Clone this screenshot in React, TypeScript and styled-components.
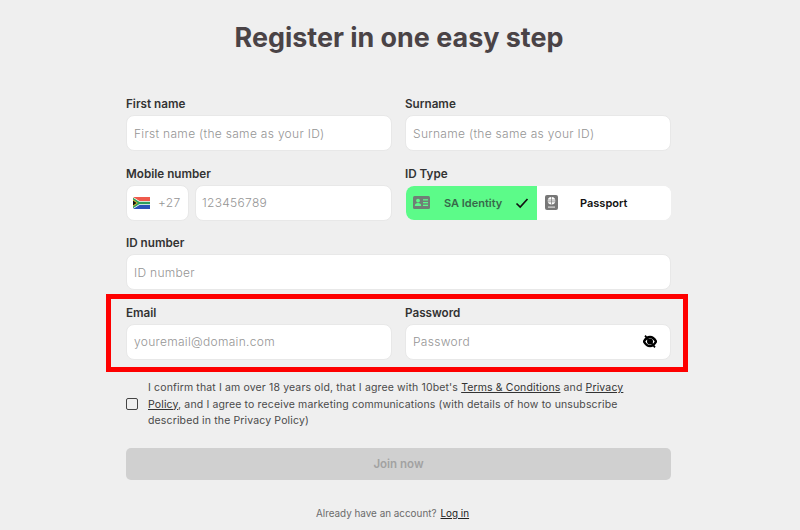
import React from "react";
import styled, { createGlobalStyle } from "styled-components";

const Global = createGlobalStyle`
  html, body { margin: 0; padding: 0; background: #efefef; }
  body { font-family: Inter, "Liberation Sans", sans-serif; color: #2b2b2b; }
  * { box-sizing: border-box; }
  svg { flex: none; }
`;

const Page = styled.main`
  width: 797px;
  height: 530px;
  overflow: hidden;
  padding-top: 21px;
  display: flex;
  flex-direction: column;
  align-items: center;
`;

const Title = styled.h1`
  margin: 0 0 41px 1px;
  font-size: 26.9px;
  line-height: 33px;
  font-weight: 700;
  color: #4a4346;
`;

const Form = styled.form`
  width: 545px;
  display: flex;
  flex-direction: column;
`;

const Row = styled.div`
  display: grid;
  grid-template-columns: 266px 266px;
  column-gap: 13px;
  margin-bottom: 13.6px;
`;

const Highlight = styled(Row)`
  position: relative;
  &::after {
    content: "";
    position: absolute;
    left: -20px;
    right: -17px;
    top: -10px;
    bottom: -12px;
    border: 5px solid #fe0000;
    pointer-events: none;
  }
`;

const Field = styled.div<{ $wide?: boolean }>`
  display: flex;
  flex-direction: column;
  grid-column: ${(p) => (p.$wide ? "1 / -1" : "auto")};
`;

const Label = styled.label`
  font-size: 11.7px;
  line-height: 19.5px;
  font-weight: 600;
  color: #333;
`;

const Box = styled.div`
  height: 36px;
  margin-top: 0.5px;
  background: #fff;
  border-radius: 8px;
  border: 1px solid #e8e8e8;
  display: flex;
  align-items: center;
  padding: 0 7px;
  font-size: 12px;
  letter-spacing: 0.3px;
  color: #959595;
  font-weight: 300;
`;

const PasswordBox = styled(Box)`
  justify-content: space-between;
  padding-right: 13px;
`;

const PhoneRow = styled.div`
  display: flex;
  gap: 6px;
`;

const CodeBox = styled(Box)`
  width: 63px;
  flex: none;
  gap: 8px;
  padding: 0 6px;
`;

const NumberBox = styled(Box)`
  flex: 1;
  padding: 0 6px;
`;

const Toggle = styled.div`
  height: 34px;
  margin: 1.5px 0 1px 1px;
  display: grid;
  grid-template-columns: 131px 134px;
  background: #fff;
  border-radius: 8px;
  overflow: hidden;
`;

const ToggleOption = styled.div<{ $active?: boolean }>`
  display: flex;
  align-items: center;
  padding: 0 8px 0 ${(p) => (p.$active ? 7 : 8)}px;
  background: ${(p) => (p.$active ? "#5cfb89" : "#fff")};
  font-size: 11px;
  font-weight: 600;
  color: ${(p) => (p.$active ? "#37694a" : "#111")};
`;

const OptionName = styled.span<{ $left: number }>`
  margin-left: ${(p) => p.$left}px;
  flex: 1;
`;

const Consent = styled.div`
  display: flex;
  align-items: center;
  gap: 10px;
  margin: 6px 0 0;
  height: 51px;
`;

const CheckBox = styled.span`
  width: 12px;
  height: 12px;
  flex: none;
  margin-bottom: 2px;
  border: 1.5px solid #444;
  border-radius: 2px;
`;

const ConsentText = styled.p`
  margin: 0;
  max-width: 490px;
  font-size: 10.5px;
  line-height: 16.5px;
  letter-spacing: 0.14px;
  font-weight: 400;
  color: #4a4a4a;
`;

const TextLink = styled.a`
  color: #333;
  text-decoration: underline;
`;

const Join = styled.button`
  margin-top: 17.6px;
  height: 32px;
  border: 0;
  border-radius: 5px;
  background: #d0d0d0;
  color: #a2a2a2;
  font: 600 11.5px Inter, "Liberation Sans", sans-serif;
`;

const Already = styled.p`
  margin: 25px 0 0;
  padding-right: 12px;
  text-align: center;
  font-size: 9.9px;
  line-height: 16px;
  color: #6b6b6b;
`;

const LogIn = styled.a`
  margin-left: 4px;
  color: #222;
  text-decoration: underline;
`;

const Flag = () => (
  <svg width="17" height="12" viewBox="0 0 17 12">
    <rect width="17" height="6" fill="#ef5a4c" />
    <rect y="6" width="17" height="6" fill="#2a53b8" />
    <path d="M0 0 L6.5 4 H17 V8 H6.5 L0 12Z" fill="#fff" />
    <path d="M0 0.8 L6.2 4.8 H17 V7.2 H6.2 L0 11.2Z" fill="#2e9e5b" />
    <path d="M0 2.5 L4.8 6 L0 9.5Z" fill="#f4c430" />
    <path d="M0 3.4 L3.6 6 L0 8.6Z" fill="#111" />
  </svg>
);

const IdCard = () => (
  <svg width="17" height="13" viewBox="0 0 17 13">
    <rect width="17" height="13" rx="1.5" fill="#6f7f76" />
    <circle cx="5" cy="4.6" r="1.9" fill="#5cfb89" />
    <path d="M1.8 10c0-2.2 1.4-3 3.2-3s3.2.8 3.2 3z" fill="#5cfb89" />
    <rect x="10" y="3.2" width="5" height="1.3" fill="#5cfb89" />
    <rect x="10" y="6" width="5" height="1.3" fill="#5cfb89" />
    <rect x="10" y="8.7" width="5" height="1.3" fill="#5cfb89" />
  </svg>
);

const PassportIcon = () => (
  <svg width="13" height="15" viewBox="0 0 13 15">
    <rect width="13" height="15" rx="2" fill="#777" />
    <circle cx="6.5" cy="5.8" r="3.8" fill="#fff" />
    <path d="M2.7 5h7.6M2.7 6.8h7.6M6.5 2v7.6" stroke="#777" strokeWidth=".7" />
    <rect x="3" y="11.5" width="7" height="1.2" fill="#ddd" />
  </svg>
);

const Check = () => (
  <svg width="14" height="14" viewBox="0 0 14 14" fill="none">
    <path d="M1.5 7.5 L5.2 11 L12.5 3" stroke="#111" strokeWidth="1.7" />
  </svg>
);

const EyeOff = () => (
  <svg width="14" height="13" viewBox="0 0 14 13" fill="none">
    <path d="M1 6.5C2.8 3.2 4.7 2 7 2S11.2 3.2 13 6.5C11.2 9.8 9.3 11 7 11S2.8 9.8 1 6.5Z" stroke="#000" strokeWidth="2.4" />
    <circle cx="7" cy="6.5" r="3" fill="#000" />
    <path d="M2 .6 L12 12.4" stroke="#000" strokeWidth="1.7" />
  </svg>
);

export default function App() {
  return (
    <Page>
      <Global />
      <Title>Register in one easy step</Title>
      <Form>
        <Row>
          <Field>
            <Label>First name</Label>
            <Box>First name (the same as your ID)</Box>
          </Field>
          <Field>
            <Label>Surname</Label>
            <Box>Surname (the same as your ID)</Box>
          </Field>
        </Row>
        <Row>
          <Field>
            <Label>Mobile number</Label>
            <PhoneRow>
              <CodeBox>
                <Flag />
                +27
              </CodeBox>
              <NumberBox>123456789</NumberBox>
            </PhoneRow>
          </Field>
          <Field>
            <Label>ID Type</Label>
            <Toggle>
              <ToggleOption $active>
                <IdCard />
                <OptionName $left={14}>SA Identity</OptionName>
                <Check />
              </ToggleOption>
              <ToggleOption>
                <PassportIcon />
                <OptionName $left={22}>Passport</OptionName>
              </ToggleOption>
            </Toggle>
          </Field>
        </Row>
        <Row>
          <Field $wide>
            <Label>ID number</Label>
            <Box>ID number</Box>
          </Field>
        </Row>
        <Highlight>
          <Field>
            <Label>Email</Label>
            <Box>youremail@domain.com</Box>
          </Field>
          <Field>
            <Label>Password</Label>
            <PasswordBox>
              Password
              <EyeOff />
            </PasswordBox>
          </Field>
        </Highlight>
        <Consent>
          <CheckBox />
          <ConsentText>
            I confirm that I am over 18 years old, that I agree with 10bet's{" "}
            <TextLink>Terms &amp; Conditions</TextLink> and <TextLink>Privacy Policy</TextLink>, and I agree to receive
            marketing communications (with details of how to unsubscribe described in the Privacy Policy)
          </ConsentText>
        </Consent>
        <Join type="button">Join now</Join>
        <Already>
          Already have an account?
          <LogIn>Log in</LogIn>
        </Already>
      </Form>
    </Page>
  );
}
